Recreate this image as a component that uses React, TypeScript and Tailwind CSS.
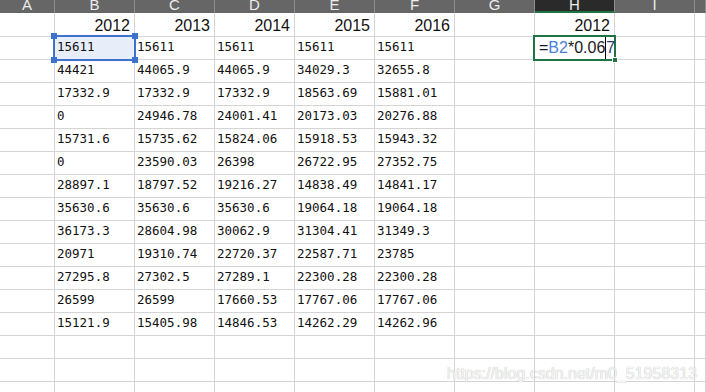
const letters = ['A', 'B', 'C', 'D', 'E', 'F', 'G', 'H', 'I', ''];

const data: string[][] = [
  ['15611', '15611', '15611', '15611', '15611'],
  ['44421', '44065.9', '44065.9', '34029.3', '32655.8'],
  ['17332.9', '17332.9', '17332.9', '18563.69', '15881.01'],
  ['0', '24946.78', '24001.41', '20173.03', '20276.88'],
  ['15731.6', '15735.62', '15824.06', '15918.53', '15943.32'],
  ['0', '23590.03', '26398', '26722.95', '27352.75'],
  ['28897.1', '18797.52', '19216.27', '14838.49', '14841.17'],
  ['35630.6', '35630.6', '35630.6', '19064.18', '19064.18'],
  ['36173.3', '28604.98', '30062.9', '31304.41', '31349.3'],
  ['20971', '19310.74', '22720.37', '22587.71', '23785'],
  ['27295.8', '27302.5', '27289.1', '22300.28', '22300.28'],
  ['26599', '26599', '17660.53', '17767.06', '17767.06'],
  ['15121.9', '15405.98', '14846.53', '14262.29', '14262.96'],
];

function widthFor(i: number) {
  if (i === 0) return 'w-[55px]';
  if (i === 9) return 'flex-1';
  return 'w-[80px]';
}

function Handle({ pos }: { pos: string }) {
  return <span className={`absolute w-[6px] h-[6px] bg-[#3c72c9] ${pos}`} />;
}

export default function App() {
  const years = ['', '2012', '2013', '2014', '2015', '2016', '', '2012', '', ''];
  const emptyRows = [0, 1, 2];

  return (
    <div className="w-[706px] h-[392px] overflow-hidden bg-white relative select-none">
      {/* column headers */}
      <div className="flex h-[13px] bg-[#666666] overflow-hidden">
        {letters.map((l, i) => (
          <div
            key={i}
            className={`${widthFor(i)} shrink-0 h-[13px] border-r border-[#8e8e8e] overflow-hidden text-center ${
              l === 'H' ? 'bg-[#2a2a2a] border-b-2 border-b-[#217346]' : ''
            }`}
          >
            <div className="-mt-[3px] text-[15px] leading-[15px] text-[#ececec] font-['Liberation_Sans',sans-serif]">
              {l}
            </div>
          </div>
        ))}
      </div>

      {/* row 1: years */}
      <div className="flex h-[24px] border-b border-[#d4d4d4]">
        {years.map((y, i) => (
          <div
            key={i}
            className={`${widthFor(i)} shrink-0 border-r border-[#d4d4d4] pr-[4px] pt-[1px] text-right text-[16px] leading-[23px] text-[#111] font-['Liberation_Sans',sans-serif]`}
          >
            {y}
          </div>
        ))}
      </div>

      {/* data rows */}
      {data.map((row, r) => (
        <div key={r} className="flex h-[23px] border-b border-[#d4d4d4]">
          {letters.map((_, i) => {
            const v = i >= 1 && i <= 5 ? row[i - 1] : '';
            const isB2 = r === 0 && i === 1;
            const isH2 = r === 0 && i === 7;
            return (
              <div
                key={i}
                className={`${widthFor(i)} shrink-0 relative border-r border-[#d4d4d4] pl-[2px] text-[12.5px] leading-[20px] text-[#111] font-['DejaVu_Sans_Mono',monospace] whitespace-nowrap ${
                  isB2 ? 'bg-[#e8eef9]' : ''
                }`}
              >
                {v}
                {isB2 && (
                  <div className="absolute left-[-2px] top-[-2px] w-[83px] h-[26px] border-2 border-[#3c72c9] z-10">
                    <Handle pos="-left-[4px] -top-[4px]" />
                    <Handle pos="-right-[4px] -top-[4px]" />
                    <Handle pos="-left-[4px] -bottom-[4px]" />
                    <Handle pos="-right-[4px] -bottom-[4px]" />
                  </div>
                )}
                {isH2 && (
                  <div className="absolute left-[-2px] top-[-2px] w-[83px] h-[26px] border-2 border-[#217346] z-10 bg-white pl-[4px] pt-[1px] text-[16px] leading-[20px] font-['Liberation_Sans',sans-serif] text-[#1a1a1a]">
                    <span>=</span>
                    <span className="text-[#4a7fd9]">B2</span>
                    <span>*0.06</span>
                    <span className="inline-block w-px h-[22px] bg-black align-middle -my-[2px] relative top-[-1px]" />
                    <span className="text-[#24396b]">7</span>
                    <span className="absolute -right-[4px] -bottom-[4px] w-[6px] h-[6px] bg-[#217346] border border-white" />
                  </div>
                )}
              </div>
            );
          })}
        </div>
      ))}

      {/* empty rows */}
      {emptyRows.map((r) => (
        <div key={r} className="flex h-[23px] border-b border-[#d4d4d4]">
          {letters.map((_, i) => (
            <div key={i} className={`${widthFor(i)} shrink-0 border-r border-[#d4d4d4]`} />
          ))}
        </div>
      ))}

      {/* watermark */}
      <div className="absolute right-[9px] top-[366px] text-[16px] leading-none text-[#f6f6f6] font-['Liberation_Sans',sans-serif] [text-shadow:0_0_1px_rgba(0,0,0,0.35)]">
        https://blog.csdn.net/m0_51958313
      </div>
    </div>
  );
}
